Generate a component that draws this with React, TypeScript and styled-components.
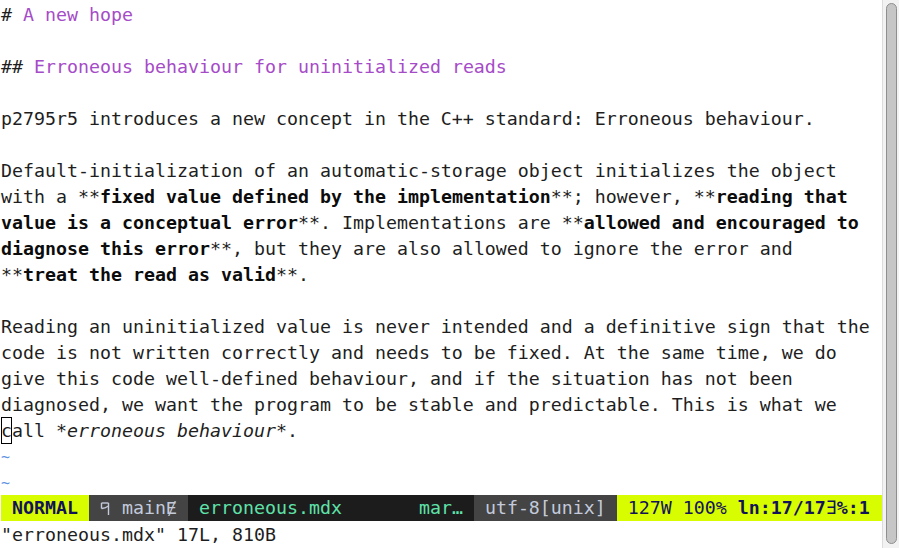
import React from "react";
import styled, { createGlobalStyle } from "styled-components";

const Global = createGlobalStyle`
  html, body { margin: 0; padding: 0; background: #ffffff; }
  body { overflow: hidden; }
`;

const CELL = 11;

const Page = styled.div`
  display: flex;
  width: 899px;
  height: 548px;
  background: #ffffff;
  font-family: "DejaVu Sans Mono", "Liberation Mono", monospace;
  font-size: 18.27px;
  line-height: 26px;
  color: #1e1e1e;
`;

const Main = styled.div`
  flex: 1;
  display: flex;
  flex-direction: column;
  padding: 1px 0 0 1px;
  min-width: 0;
`;

const Buffer = styled.div`
  display: flex;
  flex-direction: column;
`;

const Line = styled.div`
  height: 26px;
  line-height: 28px;
  white-space: pre;
`;

const Heading = styled.span`
  color: #a64bc8;
`;

const Bold = styled.b`
  font-weight: 700;
  color: #0c0c0c;
`;

const Italic = styled.i`
  font-style: italic;
`;

const Cursor = styled.span`
  display: inline-block;
  width: ${CELL}px;
  height: 27px;
  line-height: 28px;
  vertical-align: top;
  box-sizing: border-box;
  box-shadow: inset 0 0 0 1px #000000;
`;

const Tilde = styled.div`
  height: 26px;
  line-height: 28px;
  color: #5f93e3;
  font-size: 15px;
`;

const StatusBar = styled.div`
  display: flex;
  height: 26px;
  white-space: pre;
`;

const Segment = styled.span<{ $bg: string; $fg: string; $bold?: boolean; $grow?: boolean }>`
  display: flex;
  align-items: center;
  background: ${(p) => p.$bg};
  color: ${(p) => p.$fg};
  font-weight: ${(p) => (p.$bold ? 700 : 400)};
  flex: ${(p) => (p.$grow ? 1 : "none")};
`;

const Cell = styled.span`
  display: inline-flex;
  justify-content: center;
  align-items: center;
  width: ${CELL}px;
  height: 26px;
`;

const Strong = styled.span`
  font-weight: 700;
`;

const CmdLine = styled.div`
  height: 26px;
  line-height: 28px;
  white-space: pre;
  color: #1e1e1e;
`;

const ScrollTrack = styled.div`
  width: 17px;
  box-sizing: border-box;
  border-left: 1px solid #dcdcdc;
  background: #f2f2f2;
  padding: 3px 2px 4px 3px;
  display: flex;
`;

const ScrollThumb = styled.div`
  flex: 1;
  background: #c6c6c6;
  border: 1px solid #8e8e8e;
  border-radius: 6px;
`;

const BranchIcon = () => (
  <svg width="10" height="16" viewBox="0 0 10 16" fill="none" stroke="#c3cadb" strokeWidth="1.4">
    <path d="M1.5 3 V8.5" />
    <path d="M1.5 3 H8.5" />
    <path d="M8.5 3 V15" />
    <path d="M1.5 8.5 Q5 8.5 8.5 6" />
  </svg>
);

const LIME = "#d8fc00";
const NAVY = "#13135a";
const DARK = "#1c1c1c";
const MID = "#444444";
const PALE = "#c3cadb";
const MINT = "#5fe3a9";

export default function App() {
  return (
    <>
      <Global />
      <Page>
        <Main>
          <Buffer>
            <Line>
              # <Heading>A new hope</Heading>
            </Line>
            <Line> </Line>
            <Line>
              ## <Heading>Erroneous behaviour for uninitialized reads</Heading>
            </Line>
            <Line> </Line>
            <Line>p2795r5 introduces a new concept in the C++ standard: Erroneous behaviour.</Line>
            <Line> </Line>
            <Line>Default-initialization of an automatic-storage object initializes the object</Line>
            <Line>
              with a **<Bold>fixed value defined by the implementation</Bold>**; however, **
              <Bold>reading that</Bold>
            </Line>
            <Line>
              <Bold>value is a conceptual error</Bold>**. Implementations are **
              <Bold>allowed and encouraged to</Bold>
            </Line>
            <Line>
              <Bold>diagnose this error</Bold>**, but they are also allowed to ignore the error and
            </Line>
            <Line>
              **<Bold>treat the read as valid</Bold>**.
            </Line>
            <Line> </Line>
            <Line>Reading an uninitialized value is never intended and a definitive sign that the</Line>
            <Line>code is not written correctly and needs to be fixed. At the same time, we do</Line>
            <Line>give this code well-defined behaviour, and if the situation has not been</Line>
            <Line>diagnosed, we want the program to be stable and predictable. This is what we</Line>
            <Line>
              <Cursor>c</Cursor>all *<Italic>erroneous behaviour</Italic>*.
            </Line>
            <Tilde>~</Tilde>
            <Tilde>~</Tilde>
          </Buffer>
          <StatusBar>
            <Segment $bg={LIME} $fg={NAVY} $bold>
              {" NORMAL "}
            </Segment>
            <Segment $bg={MID} $fg={PALE}>
              <Cell> </Cell>
              <Cell>
                <BranchIcon />
              </Cell>
              {" main"}
              <Cell>Ɇ</Cell>
              <Cell> </Cell>
            </Segment>
            <Segment $bg={DARK} $fg={MINT}>
              {" erroneous.mdx       mar… "}
            </Segment>
            <Segment $bg={MID} $fg={PALE}>
              {" utf-8[unix] "}
            </Segment>
            <Segment $bg={LIME} $fg={NAVY} $grow>
              {" 127W 100% "}
              <Strong>ln</Strong>
              <Strong>:17/17</Strong>
              <Cell>∃</Cell>
              <Strong>%:1</Strong>
            </Segment>
          </StatusBar>
          <CmdLine>"erroneous.mdx" 17L, 810B</CmdLine>
        </Main>
        <ScrollTrack>
          <ScrollThumb />
        </ScrollTrack>
      </Page>
    </>
  );
}
